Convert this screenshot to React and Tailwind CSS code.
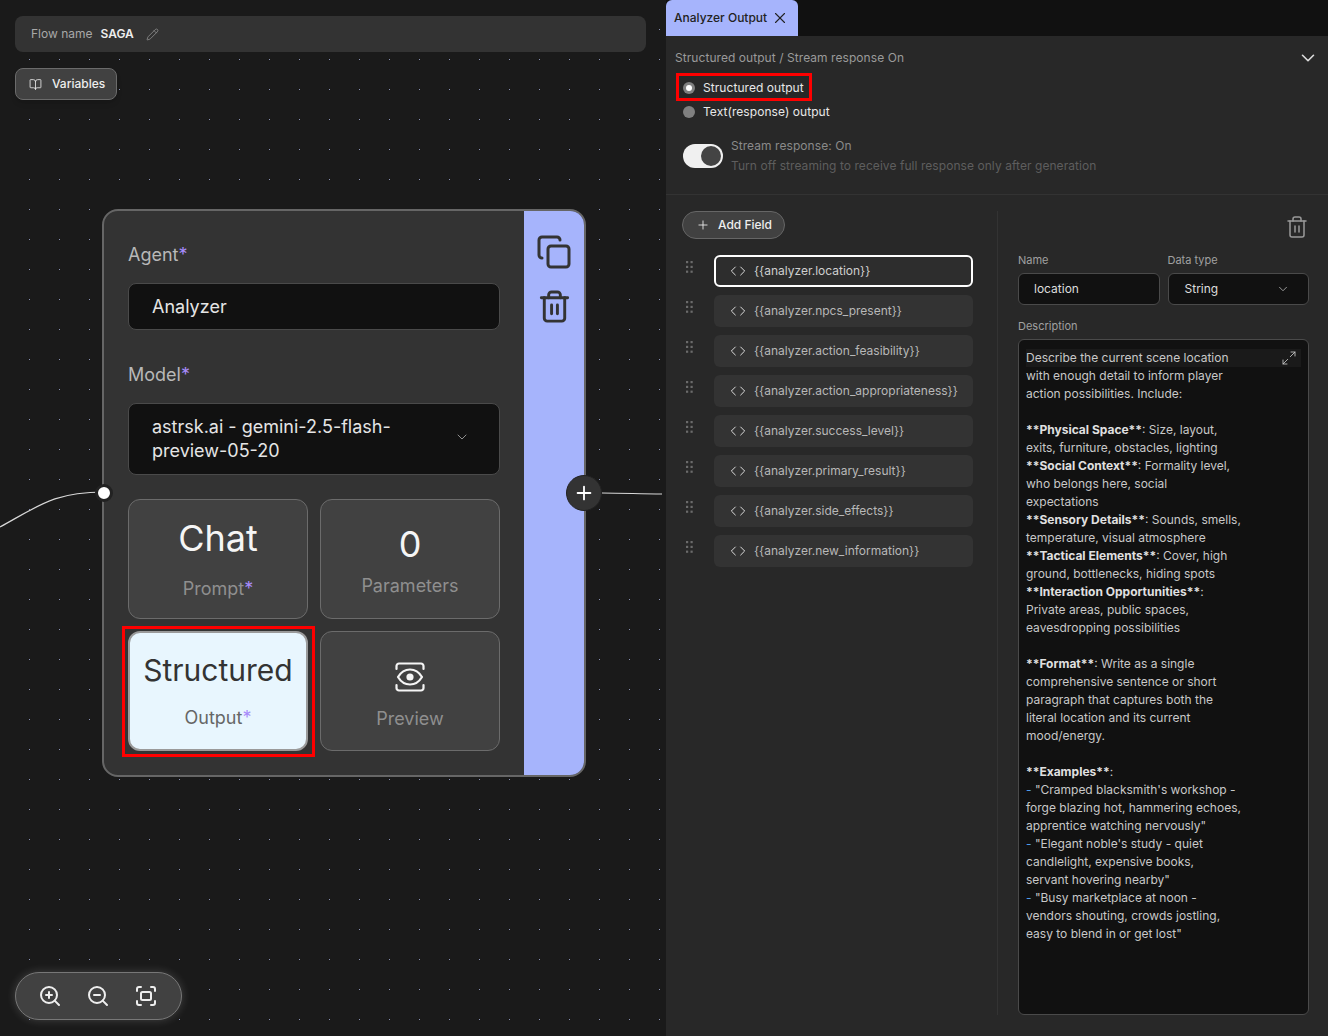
import React from 'react';
import { BookOpen, ChevronDown, Code, Copy, Maximize2, Pencil, Plus, Trash2, X, ZoomIn, ZoomOut } from 'lucide-react';

const FIELDS = [
  '{{analyzer.location}}',
  '{{analyzer.npcs_present}}',
  '{{analyzer.action_feasibility}}',
  '{{analyzer.action_appropriateness}}',
  '{{analyzer.success_level}}',
  '{{analyzer.primary_result}}',
  '{{analyzer.side_effects}}',
  '{{analyzer.new_information}}',
];

// b = bold lead-in, d = blue list dash, t = plain text
const DESCRIPTION = [
  { t: 'Describe the current scene location' },
  { t: 'with enough detail to inform player' },
  { t: 'action possibilities. Include:' },
  { t: '' },
  { b: '**Physical Space**', t: ': Size, layout,' },
  { t: 'exits, furniture, obstacles, lighting' },
  { b: '**Social Context**', t: ': Formality level,' },
  { t: 'who belongs here, social' },
  { t: 'expectations' },
  { b: '**Sensory Details**', t: ': Sounds, smells,' },
  { t: 'temperature, visual atmosphere' },
  { b: '**Tactical Elements**', t: ': Cover, high' },
  { t: 'ground, bottlenecks, hiding spots' },
  { b: '**Interaction Opportunities**', t: ':' },
  { t: 'Private areas, public spaces,' },
  { t: 'eavesdropping possibilities' },
  { t: '' },
  { b: '**Format**', t: ': Write as a single' },
  { t: 'comprehensive sentence or short' },
  { t: 'paragraph that captures both the' },
  { t: 'literal location and its current' },
  { t: 'mood/energy.' },
  { t: '' },
  { b: '**Examples**', t: ':' },
  { d: true, t: '"Cramped blacksmith\'s workshop -' },
  { t: 'forge blazing hot, hammering echoes,' },
  { t: 'apprentice watching nervously"' },
  { d: true, t: '"Elegant noble\'s study - quiet' },
  { t: 'candlelight, expensive books,' },
  { t: 'servant hovering nearby"' },
  { d: true, t: '"Busy marketplace at noon -' },
  { t: 'vendors shouting, crowds jostling,' },
  { t: 'easy to blend in or get lost"' },
];

function Star() {
  return <span className="text-[#a78bfa]">*</span>;
}

function PreviewIcon() {
  return (
    <svg width="30" height="30" viewBox="0 0 30 30" fill="none" stroke="#f5f5f5" strokeWidth="2.2" strokeLinecap="round" strokeLinejoin="round">
      <path d="M1.5 7V4a2.5 2.5 0 0 1 2.5-2.500h22A2.500 2.500 0 0 1 28.500 4v3" />
      <path d="M1.500 23v3A2.500 2.500 0 0 0 4 28.500h22a2.500 2.500 0 0 0 2.500-2.500v-3" />
      <path d="M3 15c3-5 7-7.500 12-7.500S24 10 27 15c-3 5-7 7.500-12 7.500S6 20 3 15z" />
      <circle cx="15" cy="15" r="2.500" fill="#f5f5f5" />
    </svg>
  );
}

function FitIcon() {
  return (
    <svg width="24" height="24" viewBox="0 0 24 24" fill="none" stroke="currentColor" strokeWidth="2" strokeLinecap="round" strokeLinejoin="round">
      <path d="M3 7V5a2 2 0 0 1 2-2h2" />
      <path d="M17 3h2a2 2 0 0 1 2 2v2" />
      <path d="M21 17v2a2 2 0 0 1-2 2h-2" />
      <path d="M7 21H5a2 2 0 0 1-2-2v-2" />
      <rect x="7" y="8" width="10" height="8" rx="1.500" />
    </svg>
  );
}

function GripDots() {
  return (
    <svg width="7" height="12" viewBox="0 0 7 12" fill="#6b6b6b" className="ml-1 mt-[6px] shrink-0">
      <rect x="0" y="0" width="2.200" height="2.200" />
      <rect x="4.500" y="0" width="2.200" height="2.200" />
      <rect x="0" y="4.800" width="2.200" height="2.200" />
      <rect x="4.500" y="4.800" width="2.200" height="2.200" />
      <rect x="0" y="9.600" width="2.200" height="2.200" />
      <rect x="4.500" y="9.600" width="2.200" height="2.200" />
    </svg>
  );
}

function AgentNode() {
  return (
    <div className="absolute left-[102px] top-[209px] w-[484px] h-[568px] flex rounded-2xl border-2 border-[#666] bg-[#333] overflow-hidden">
      <div className="w-[420px] pl-6 pr-6 pt-8">
        <div className="text-lg leading-6 text-[#b8b8b8]">Agent<Star /></div>
        <div className="mt-4 h-[47px] rounded-lg border border-[#4a4a4a] bg-[#111] pl-[23px] flex items-center text-lg text-[#e5e5e5]">Analyzer</div>
        <div className="mt-[33px] text-lg leading-6 text-[#b8b8b8]">Model<Star /></div>
        <div className="mt-4 h-[72px] rounded-lg border border-[#4a4a4a] bg-[#111] pl-[23px] pr-[29px] flex items-center justify-between text-lg leading-6 text-[#e5e5e5]">
          <span className="w-[270px]">astrsk.ai - gemini-2.5-flash-preview-05-20</span>
          <ChevronDown size={16} strokeWidth={1.5} className="mb-1 text-[#8f8f8f]" />
        </div>
        <div className="mt-6 grid grid-cols-2 gap-3">
          <div className="h-[120px] rounded-xl border border-[#6b6b6b] bg-[#414141] flex flex-col items-center">
            <div className="text-[36px] text-[#f5f5f5] leading-none mt-5 h-[46px]">Chat</div>
            <div className="text-lg leading-6 text-[#8f8f8f] mt-[11px]">Prompt<Star /></div>
          </div>
          <div className="h-[120px] rounded-xl border border-[#6b6b6b] bg-[#414141] flex flex-col items-center">
            <div className="text-[36px] text-[#f5f5f5] leading-none mt-[26px] h-[46px]">0</div>
            <div className="text-lg leading-6 text-[#8f8f8f] mt-[2px]">Parameters</div>
          </div>
          <div className="relative h-[120px] rounded-xl border-2 border-[#9a9a9a] bg-[#e8f6fe] flex flex-col items-center">
            <div className="absolute -left-[8px] -right-[9px] -top-[7px] -bottom-[8px] border-[3px] border-[#ff0000]" />
            <div className="text-[30px] text-[#333] leading-none mt-[22px] h-[46px]">Structured</div>
            <div className="text-lg leading-6 text-[#666] mt-[5px]">Output<Star /></div>
          </div>
          <div className="h-[120px] rounded-xl border border-[#6b6b6b] bg-[#414141] flex flex-col items-center">
            <div className="mt-[30px] h-[30px]"><PreviewIcon /></div>
            <div className="text-lg leading-6 text-[#8f8f8f] mt-[15px]">Preview</div>
          </div>
        </div>
      </div>
      <div className="flex-1 bg-[#a6b4fc] flex flex-col items-center pt-[23px] gap-[19px] text-[#333]">
        <Copy size={36} strokeWidth={2} />
        <Trash2 size={35} strokeWidth={2} />
      </div>
    </div>
  );
}

function Canvas() {
  return (
    <div className="relative w-[666px] h-[1036px] overflow-hidden shrink-0 bg-[#1a1a1a] bg-[radial-gradient(circle_at_0.5px_0.5px,#8c94b8_0.8px,transparent_1px)] bg-[length:30px_30px] bg-[position:29px_-1px] px-[15px] pt-[16px]">
      <div className="h-9 w-[631px] rounded-lg bg-[#333] flex items-center pl-4 text-xs">
        <span className="text-[#a8a8a8]">Flow name</span>
        <span className="ml-2 font-semibold text-[#eee]">SAGA</span>
        <Pencil size={13} strokeWidth={1.25} className="ml-[12px] text-[#a0a0a0]" />
      </div>
      <div className="mt-4 w-[102px] h-8 rounded-lg border border-[#6b6b6b] bg-[#414141] shadow-md flex items-center pl-[13px] gap-[10px] text-xs font-medium text-[#eee]">
        <BookOpen size={13} strokeWidth={1.5} />
        Variables
      </div>

      <svg className="absolute left-0 top-0" width="666" height="600" fill="none" stroke="#d8d8d8" strokeWidth="1.2">
        <path d="M0 527C40 505 55 492 104 492" />
        <path d="M602 493C625 493 640 494 662 494" />
      </svg>
      <AgentNode />
      <div className="absolute left-[95px] top-[484px] w-[18px] h-[18px] rounded-full bg-white border-[3px] border-[#222]" />
      <div className="absolute left-[566px] top-[475px] w-9 h-9 rounded-full bg-[#333] border border-[#222] flex items-center justify-center text-white">
        <Plus size={22} strokeWidth={2} />
      </div>

      <div className="absolute left-[15px] top-[972px] w-[167px] h-[48px] rounded-full border border-[#777] bg-[#414141] shadow-[0_0_10px_rgba(255,255,255,0.18)] flex items-center pl-[22px] gap-6 text-[#eee]">
        <ZoomIn size={24} strokeWidth={2} />
        <ZoomOut size={24} strokeWidth={2} />
        <FitIcon />
      </div>
    </div>
  );
}

function FieldRow({ name, active }) {
  return (
    <div className="flex gap-[21px] items-start h-8">
      <GripDots />
      <div className={`w-[259px] h-8 rounded-md flex items-center gap-2 text-xs ${active ? 'pl-[14px] border-2 border-white bg-[#2d2d2d] text-[#cfcfcf]' : 'pl-4 bg-[#333] text-[#b8b8b8]'}`}>
        <Code size={16} strokeWidth={1.5} className="text-[#ddd]" />
        <span>{name}</span>
      </div>
    </div>
  );
}

function OutputPanel() {
  return (
    <div className="flex-1 h-[1036px] flex flex-col bg-[#282828]">
      <div className="h-9 bg-[#111] shrink-0">
        <div className="w-[132px] h-9 rounded-t-md bg-[#a6b4fc] flex items-center pl-2 gap-1 text-xs font-medium text-[#222]">
          Analyzer Output
          <X size={18} strokeWidth={1.5} />
        </div>
      </div>

      <div className="h-[159px] shrink-0 border-b border-[#333] pl-[9px] pr-[9px] pt-[11px]">
        <div className="flex justify-between items-center text-xs leading-[18px] tracking-[0.06px] text-[#9a9a9a]">
          Structured output / Stream response On
          <ChevronDown size={22} strokeWidth={1.75} className="text-[#ddd]" />
        </div>
        <div className="relative mt-[9px] h-5 flex items-center pl-2 gap-[8px] text-xs tracking-[0.06px] text-[#e8e8e8]">
          <div className="absolute left-[1px] -top-[5px] w-[136px] h-[28px] border-[3px] border-[#ff0000]" />
          <span className="w-3 h-3 rounded-full bg-[#808080] flex items-center justify-center">
            <span className="w-[6px] h-[6px] rounded-full bg-white" />
          </span>
          Structured output
        </div>
        <div className="mt-1 h-5 flex items-center pl-2 gap-[8px] text-xs tracking-[0.06px] text-[#e8e8e8]">
          <span className="w-3 h-3 rounded-full bg-[#808080]" />
          Text(response) output
        </div>
        <div className="mt-[14px] pl-2 flex gap-[8px]">
          <div className="mt-2 w-10 h-6 rounded-full bg-[#f0f0f0] flex items-center justify-end pr-[2px]">
            <span className="w-5 h-5 rounded-full bg-[#444]" />
          </div>
          <div className="text-xs leading-5 tracking-[0.06px]">
            <div className="text-[#8a8a8a]">Stream response: On</div>
            <div className="text-[#5e5e5e]">Turn off streaming to receive full response only after generation</div>
          </div>
        </div>
      </div>

      <div className="flex-1 flex min-h-0 pb-[21px]">
        <div className="w-[332px] shrink-0 border-r border-[#333] pl-4 mt-4">
          <div className="w-[103px] h-7 rounded-full border border-[#666] bg-[#414141] flex items-center pl-[13px] gap-2 text-xs font-medium text-[#eee]">
            <Plus size={14} strokeWidth={1.5} />
            Add Field
          </div>
          <div className="mt-4 flex flex-col gap-2">
            {FIELDS.map((f, i) => <FieldRow key={f} name={f} active={i === 0} />)}
          </div>
        </div>

        <div className="flex-1 pl-5 pr-[19px] flex flex-col">
          <div className="flex justify-end pt-5">
            <Trash2 size={24} strokeWidth={1.5} className="text-[#999]" />
          </div>
          <div className="mt-[13px] grid grid-cols-[141.5px_141.5px] gap-[8px] text-[11px] leading-4 text-[#a0a0a0]">
            <div>
              <div>Name</div>
              <div className="mt-[5px] h-8 rounded-md border border-[#4a4a4a] bg-[#111] pl-[15px] flex items-center text-xs text-[#ddd]">location</div>
            </div>
            <div>
              <div>Data type</div>
              <div className="mt-[5px] h-8 rounded-md border border-[#4a4a4a] bg-[#111] pl-4 pr-[18px] flex items-center justify-between text-xs text-[#ddd]">
                String
                <ChevronDown size={14} strokeWidth={1.5} className="text-[#aaa]" />
              </div>
            </div>
          </div>
          <div className="mt-[13px] text-[11px] leading-4 text-[#a0a0a0]">Description</div>
          <div className="relative mt-[5px] flex-1 rounded-md border border-[#4a4a4a] bg-[#111] px-[7px] pt-[9px] text-xs leading-[18px] text-[#c8c8c8]">
            <div className="absolute left-[7px] right-[7px] top-[9px] h-[18px] bg-[#1a1a1a] flex justify-end items-center pr-[3px]">
              <Maximize2 size={16} strokeWidth={1.25} className="mr-[1px] text-[#ccc]" />
            </div>
            <div className="relative">
              {DESCRIPTION.map((line, i) => (
                <div key={i} className="h-[18px] whitespace-pre">
                  {line.d && <span className="text-[#4f9be8]">- </span>}
                  {line.b && <span className="font-bold text-[#e0e0e0]">{line.b}</span>}
                  {line.t}
                </div>
              ))}
            </div>
          </div>
        </div>
      </div>
    </div>
  );
}

export default function App() {
  return (
    <div className="flex w-[1328px] h-[1036px] overflow-hidden font-['Inter',sans-serif]">
      <Canvas />
      <OutputPanel />
    </div>
  );
}
